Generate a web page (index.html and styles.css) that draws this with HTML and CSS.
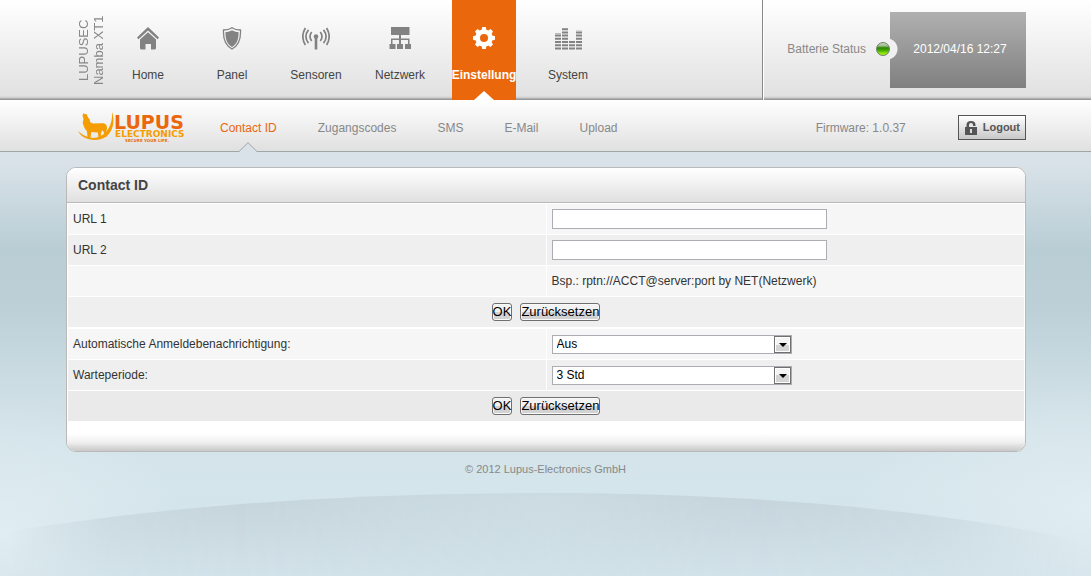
FILE: index.html
```html
<!DOCTYPE html>
<html lang="de">
<head>
<meta charset="utf-8">
<title>LUPUSEC Namba XT1 – Contact ID</title>
<link rel="stylesheet" href="styles.css">
</head>
<body>
<svg class="hill" viewBox="0 0 1091 84" preserveAspectRatio="none" aria-hidden="true">
  <defs>
    <linearGradient id="fade" x1="0" y1="0" x2="0" y2="1">
      <stop offset="0" stop-color="#c4d3da"/>
      <stop offset=".45" stop-color="#cad9e0"/>
      <stop offset="1" stop-color="#d2e2e9"/>
    </linearGradient>
    <linearGradient id="sides" x1="0" x2="1" y1="0" y2="0">
      <stop offset="0.01" stop-color="#000"/>
      <stop offset=".1" stop-color="#bbb"/>
      <stop offset=".22" stop-color="#fff"/>
      <stop offset=".36" stop-color="#bbb"/>
      <stop offset=".5" stop-color="#888"/>
      <stop offset=".64" stop-color="#ddd"/>
      <stop offset=".7" stop-color="#eee"/>
      <stop offset=".85" stop-color="#bbb"/>
      <stop offset=".99" stop-color="#000"/>
    </linearGradient>
    <mask id="edge"><rect width="1091" height="84" fill="url(#sides)"/></mask>
  </defs>
  <path d="M0 41C150 16 330 1 545 1c220 0 420 20 546 51v32H0z" fill="url(#fade)" mask="url(#edge)"/>
</svg>

<header class="topbar">
  <div class="wrap topbar-row">
    <div class="brand">LUPUSEC<br>Namba XT1</div>
    <nav class="mainnav" aria-label="Hauptmenü">
      <a href="#home"><svg viewBox="0 0 28 24"><path d="M14 0 25 10.400 23.500 12.200 14 3.600 4.500 12.200 3 10.400z"/><path d="M14 5.200 22 12.400V21q0 1.500-1.500 1.500H17V17h-5.500v5.500H7.500Q6 22.500 6 21v-8.600z"/></svg><span>Home</span></a>
      <a href="#panel"><svg viewBox="0 0 28 24"><path d="M14 .7c2.500 1.800 5.300 2.300 8.500 2.300.5 9.500-1.500 15.500-8.500 19C7 18.500 5 12.500 5.500 3 8.700 3 11.500 2.500 14 .7z" fill="none" stroke="#828282" stroke-width="1.300"/><path d="M14 3.300c2 1.300 4 1.700 6.500 1.800.2 7-1.300 12-6.500 14.900C8.800 17.100 7.300 12.100 7.500 5.100 10 5 12 4.600 14 3.300z"/></svg><span>Panel</span></a>
      <a href="#sensoren"><svg viewBox="0 0 28 24"><circle cx="14" cy="9.500" r="2.300"/><path d="M12.700 9.500h2.600v13h-2.600z"/><path d="M9.700 5q-3.400 4.500 0 9M6.500 2.900q-5.200 6.600 0 13.200M3.400 1q-5.200 8.500 0 17M18.300 5q3.400 4.500 0 9M21.500 2.900q5.200 6.600 0 13.200M24.600 1q5.200 8.500 0 17" fill="none" stroke="#828282" stroke-width="1.700"/></svg><span>Sensoren</span></a>
      <a href="#netzwerk"><svg viewBox="0 0 28 24"><path d="M5 0h18.500v8H15v3.500h8.500V17H25v5h-6v-5h3v-4h-7v4h2v5h-6v-5h2v-4H6.500v4h3v5h-6v-5H5v-5.500h8V8H5z"/></svg><span>Netzwerk</span></a>
      <a href="#einstellung" class="active"><svg viewBox="0 0 28 24"><path d="M12.200 0h3.600l.6 2.800 1.700.7L20.500 2 23 4.500 21.500 6.900l.7 1.700 2.800.6v3.600l-2.800.6-.7 1.700 1.500 2.400-2.500 2.500-2.400-1.500-1.700.7-.6 2.800h-3.600l-.6-2.800-1.700-.7L7.500 20 5 17.500l1.500-2.400-.7-1.700L3 12.800V9.200l2.800-.6.7-1.700L5 4.500 7.500 2l2.400 1.500 1.700-.7z"/><circle cx="14" cy="11" r="8.600"/><circle cx="14" cy="11" r="4" fill="#ea670c"/></svg><span>Einstellung</span></a>
      <a href="#system"><svg viewBox="0 0 28 24"><g fill="none" stroke="#828282" stroke-width="6" stroke-dasharray="2 1.200"><path d="M4 22.400V6M11 22.400V0M18 22.400V13M25 22.400V3"/></g></svg><span>System</span></a>
    </nav>
    <div class="status">
      <span>Batterie Status</span>
      <div class="clock"><i class="led" role="img" aria-label="OK"></i>2012/04/16 12:27</div>
    </div>
  </div>
</header>

<div class="subbar">
  <div class="wrap subbar-row">
    <svg class="logo" viewBox="0 0 112 32" role="img" aria-label="Lupus Electronics">
      <path d="M34 0c4 11 0 26-14 27.800C10 28.600 3 25 0 19c5 5 12 7.800 19 6.600C29 23 35 12 34 0z" fill="#f59c00"/>
      <path d="M4.500 3.500 5.500 1l1.300 1.300L8.500 2l1.300 3 1.700 2.200.8 3 2.700 1.300 9-.3c4 0 5 2 5 5l-.6 3 .8 5-2.400.8-.8-4.800-1.800-2-1.400 3.300.6 4h-2.800l-.8-5-6.500-.4-.8 6-2.900-.1-.6-6.500L6.500 16l-1.800-5 .8-4z" fill="#f59c00"/>
      <text class="logo-main" x="36" y="17">LUPUS</text>
      <text class="logo-sub" x="37" y="25">ELECTRONICS</text>
      <text class="logo-tag" x="47" y="30">SECURE YOUR LIFE.</text>
    </svg>
    <nav class="subnav" aria-label="Untermenü">
      <a href="#contact" class="active">Contact ID<svg class="notch" viewBox="0 0 20 11" aria-hidden="true"><path d="M0 11v-1.500h1L10 .7l9 8.800h1V11z" fill="#d8e2e8"/><path d="M0 9.500h1L10 .7l9 8.800h1" fill="none" stroke="#a0a5a8"/></svg></a>
      <a href="#codes">Zugangscodes</a>
      <a href="#sms">SMS</a>
      <a href="#email">E-Mail</a>
      <a href="#upload">Upload</a>
    </nav>
    <span class="firmware">Firmware: 1.0.37</span>
    <button class="logout" type="button"><svg viewBox="0 0 12 14" aria-hidden="true"><path d="M0 6h1.500V4q0-4 4.500-4t4.500 4v1H8V4Q8 2 6 2T4 4v2h8v8H0z" fill="#555"/><path d="M5 8h2v4H5z" fill="#ddd"/></svg>Logout</button>
  </div>
</div>

<main class="wrap">
  <section class="panel">
    <h1>Contact ID</h1>
    <form>
      <table>
        <tr><td><label for="url1">URL 1</label></td><td><input id="url1" type="text"></td></tr>
        <tr><td><label for="url2">URL 2</label></td><td><input id="url2" type="text"></td></tr>
        <tr><td></td><td>Bsp.: rptn://ACCT@server:port by NET(Netzwerk)</td></tr>
        <tr><td colspan="2" class="actions"><button type="submit">OK</button><button type="reset">Zurücksetzen</button></td></tr>
      </table>
    </form>
    <form>
      <table>
        <tr><td><label for="auto">Automatische Anmeldebenachrichtigung:</label></td><td><span class="pick"><select id="auto"><option>Aus</option></select></span></td></tr>
        <tr><td><label for="wait">Warteperiode:</label></td><td><span class="pick"><select id="wait"><option>3 Std</option></select></span></td></tr>
        <tr class="last"><td colspan="2" class="actions"><button type="submit">OK</button><button type="reset">Zurücksetzen</button></td></tr>
      </table>
    </form>
    <div class="panel-foot"></div>
  </section>
</main>
<footer>© 2012 Lupus-Electronics GmbH</footer>
</body>
</html>
```
FILE: styles.css
```css
*, *::before, *::after { box-sizing: border-box; }

body {
  margin: 0;
  min-height: 100vh;
  position: relative;
  font: 12px/15px "Liberation Sans", Arial, sans-serif;
  color: #333;
  background:
    radial-gradient(ellipse 180px 130px at 0 530px, #e0edf2, #e0edf200),
    radial-gradient(ellipse 240px 130px at 100% 510px, #e0edf2, #e0edf200),
    linear-gradient(#d8e2e8 0, #d8e2e8 165px, #cbd9e0 200px, #b9cdd5 250px, #bdd0d8 310px, #cbdce2 380px, #d3e3e9 440px, #d4e5eb 490px, #d0e1e8 576px);
}

a { color: inherit; text-decoration: none; }

.wrap {
  max-width: 961px;
  margin: 0 auto;
  padding-left: 1px;
}

.hill {
  position: absolute;
  left: 0;
  bottom: 0;
  z-index: -1;
  width: 100%;
  height: 84px;
}

/* top bar */
.topbar {
  height: 100px;
  background: linear-gradient(#fff, #e1e1e1 96px, #c8c8c8 98px, #999 99px);
}

.topbar-row { display: flex; height: 100%; }

.brand {
  writing-mode: vertical-rl;
  transform: rotate(180deg);
  width: 50px;
  padding-right: 10px;
  font-size: 13px;
  text-align: center;
  color: #888;
}

.mainnav { display: flex; gap: 20px; flex: 1; }

.mainnav a {
  position: relative;
  display: flex;
  flex-direction: column;
  align-items: center;
  gap: 17px;
  width: 64px;
  padding-top: 27px;
  color: #444;
}

.mainnav svg { width: 28px; height: 24px; fill: #828282; }

.mainnav .active {
  background: #ea670c;
  color: #fff;
  font-weight: bold;
}

.mainnav .active svg { fill: #fff; }

.mainnav .active::after {
  content: "";
  position: absolute;
  bottom: 0;
  border: 10px solid transparent;
  border-top: 0;
  border-bottom: 9px solid #fff;
}

.status {
  display: flex;
  align-items: center;
  gap: 24px;
  padding: 0 0 2px 24px;
  border-left: 1px solid #888;
  box-shadow: inset 1px 0 #fff;
  color: #888;
}

.clock {
  position: relative;
  display: flex;
  align-items: center;
  justify-content: center;
  width: 136px;
  height: 76px;
  margin-top: 2px;
  padding: 0 0 2px 4px;
  color: #fff;
  background: radial-gradient(circle at -3px 37px, #f0f0f0 10px, transparent 11px), linear-gradient(#b0b0b0, #808080);
}

.led {
  position: absolute;
  left: -14px;
  top: 30px;
  width: 14px;
  height: 14px;
  border: 1px solid #6d7f68;
  border-radius: 50%;
  background: linear-gradient(#c9d8c0 0, #9aba88 25%, #2f8500 40%, #3fa800 60%, #a0ee10 90%);
}

/* sub bar */
.subbar {
  height: 52px;
  background: linear-gradient(#fff, #e0e0e0);
  border-bottom: 1px solid #a0a5a8;
}

.subbar-row { display: flex; align-items: center; height: 100%; padding-top: 5px; }

.logo { width: 112px; height: 32px; margin: 0 30px 0 12px; flex: none; }
.logo-main { font: bold 19px "DejaVu Sans", sans-serif; fill: #ea670c; }
.logo-sub { font: bold 9px "DejaVu Sans", sans-serif; fill: #f59c00; }
.logo-tag { font: bold 4px "DejaVu Sans", sans-serif; fill: #ea670c; }

.subnav { display: flex; gap: 41px; flex: 1; color: #888; }
.subnav a { position: relative; }
.subnav .active { color: #ea670c; }

.notch {
  position: absolute;
  left: calc(50% - 10px);
  top: 21px;
  width: 20px;
  height: 11px;
}

.firmware { margin-right: 52px; color: #888; }

.logout {
  display: flex;
  align-items: center;
  gap: 6px;
  height: 25px;
  margin-bottom: 1px;
  padding: 0 5px 0 6px;
  border: 1px solid #555;
  background: linear-gradient(#fff, #c8c8c8);
  font: bold 11px/15px "Liberation Sans", Arial, sans-serif;
  color: #555;
}

.logout svg { width: 12px; height: 14px; }

/* panel */
.panel {
  margin-top: 15px;
  border: 1px solid #b9b9b9;
  border-radius: 10px;
  overflow: hidden;
  background: #fff;
}

h1 {
  margin: 0;
  padding: 0 11px;
  font-size: 14px;
  line-height: 34px;
  color: #444;
  background: linear-gradient(#fff, #e0e0e0);
  border-bottom: 1px solid #b9b9b9;
}

form { margin: 0; }

table {
  width: 100%;
  table-layout: fixed;
  border-spacing: 1px;
}

td { height: 30px; padding: 0 5px; background: #f6f6f6; }
tr:nth-child(even) td { background: #efefef; }
.last td { background: #eaeaea; }

input {
  display: block;
  width: 275px;
  max-width: 100%;
  height: 20px;
  padding: 1px 4px;
  border: 1px solid #abadb3;
  font: inherit;
}

.pick { position: relative; display: block; width: 240px; max-width: 100%; }

select {
  display: block;
  width: 100%;
  height: 19px;
  padding: 0 4px;
  border: 1px solid #abadb3;
  border-radius: 0;
  appearance: none;
  background: #fff;
  font: inherit;
  color: #000;
}

.pick::before {
  content: "";
  position: absolute;
  right: 1px;
  top: 1px;
  width: 17px;
  height: 17px;
  border: 1px solid #707070;
  background: linear-gradient(#f4f4f4 50%, #d4d4d4 50%);
  box-shadow: inset 0 0 0 1px #fff;
  pointer-events: none;
}

.pick::after {
  content: "";
  position: absolute;
  right: 5px;
  top: 8px;
  border: 4px solid transparent;
  border-top-color: #000;
  border-bottom: 0;
  pointer-events: none;
}

.actions { text-align: center; }

.actions button {
  height: 18px;
  padding: 0;
  border: 1px solid #707070;
  border-radius: 3px;
  background: linear-gradient(#f2f2f2 50%, #d2d2d2 50%);
  box-shadow: inset 0 0 0 1px #fafafa;
  font: 13px/16px "Liberation Sans", Arial, sans-serif;
  color: #000;
  vertical-align: middle;
}

.actions button + button { margin-left: 8px; }

.panel-foot {
  height: 29px;
  background: linear-gradient(#fff 40%, #f0f0f0 70%, #c8c8c8);
}

footer {
  padding: 10px 0;
  text-align: center;
  font-size: 11px;
  color: #888;
}
```
